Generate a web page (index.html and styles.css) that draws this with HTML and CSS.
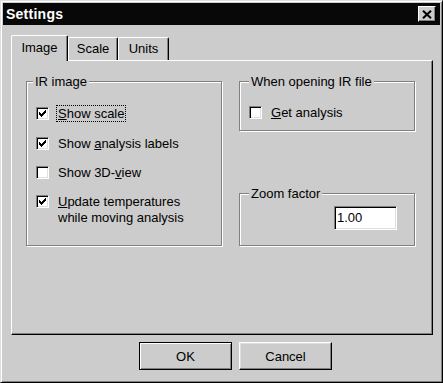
FILE: index.html
```html
<!DOCTYPE html>
<html lang="en">
<head>
<meta charset="utf-8">
<title>Settings</title>
<link rel="stylesheet" href="styles.css">
</head>
<body>
<div class="window">
  <div class="titlebar">
    <span class="title">Settings</span>
    <button class="close" type="button" aria-label="Close">
      <svg width="10" height="9" viewBox="0 0 10 9"><path d="M1 0.8 L9 8.2 M9 0.8 L1 8.2" stroke="#000" stroke-width="2.1" fill="none"/></svg>
    </button>
  </div>
  <div class="body">
    <div class="tabs">
      <div class="tab tab--active tab--image">Image</div>
      <div class="tab tab--scale">Scale</div>
      <div class="tab tab--units">Units</div>
    </div>
    <div class="panel">
      <div class="panel-grid">
        <div class="group group--ir">
          <span class="group-caption group-caption--ir">IR image</span>
          <div class="check-list">
            <div class="check-row check-row--first">
              <span class="checkbox"><svg class="tick" width="7" height="7" viewBox="0 0 7 7"><path d="M6 0h1v1h-1zM5 1h2v1h-2zM0 2h1v1h-1zM4 2h3v1h-3zM0 3h2v1h-2zM3 3h3v1h-3zM0 4h5v1h-5zM1 5h3v1h-3zM2 6h1v1h-1z" fill="#000"/></svg></span>
              <span class="check-label check-label--focus"><u>S</u>how scale</span>
            </div>
            <div class="check-row">
              <span class="checkbox"><svg class="tick" width="7" height="7" viewBox="0 0 7 7"><path d="M6 0h1v1h-1zM5 1h2v1h-2zM0 2h1v1h-1zM4 2h3v1h-3zM0 3h2v1h-2zM3 3h3v1h-3zM0 4h5v1h-5zM1 5h3v1h-3zM2 6h1v1h-1z" fill="#000"/></svg></span>
              <span class="check-label">Show <u>a</u>nalysis labels</span>
            </div>
            <div class="check-row">
              <span class="checkbox"></span>
              <span class="check-label">Show 3D-<u>v</u>iew</span>
            </div>
            <div class="check-row">
              <span class="checkbox"><svg class="tick" width="7" height="7" viewBox="0 0 7 7"><path d="M6 0h1v1h-1zM5 1h2v1h-2zM0 2h1v1h-1zM4 2h3v1h-3zM0 3h2v1h-2zM3 3h3v1h-3zM0 4h5v1h-5zM1 5h3v1h-3zM2 6h1v1h-1z" fill="#000"/></svg></span>
              <span class="check-label check-label--multi"><u>U</u>pdate temperatures<br>while moving analysis</span>
            </div>
          </div>
        </div>
        <div class="right-col">
          <div class="group group--open">
            <span class="group-caption">When opening IR file</span>
            <div class="check-row">
              <span class="checkbox"></span>
              <span class="check-label"><u>G</u>et analysis</span>
            </div>
          </div>
          <div class="group group--zoom">
            <span class="group-caption">Zoom factor</span>
            <div class="textbox">1.00</div>
          </div>
        </div>
      </div>
    </div>
    <div class="buttons">
      <button class="btn btn--default" type="button">OK</button>
      <button class="btn" type="button">Cancel</button>
    </div>
  </div>
</div>
</body>
</html>
```

FILE: styles.css
```css
* {
  box-sizing: border-box;
}

html, body {
  margin: 0;
  padding: 0;
  background: #cccccc;
}

body {
  font-family: "Liberation Sans", Arial, sans-serif;
  font-size: 13px;
  color: #000;
}

.window {
  width: 443px;
  height: 383px;
  background: #cccccc;
  border: 1px solid;
  border-color: #dfdfdf #000 #000 #dfdfdf;
  box-shadow: inset 1px 1px 0 #fff, inset -1px -1px 0 #808080;
  padding: 2px;
}

.titlebar {
  height: 22px;
  background: #080808;
  display: flex;
  align-items: center;
  justify-content: space-between;
  padding: 0 4px 0 3px;
}

.title {
  color: #fff;
  font-weight: bold;
  font-size: 14px;
  letter-spacing: 0.25px;
  line-height: 22px;
}

.close {
  width: 18px;
  height: 16px;
  padding: 0;
  margin: 0;
  background: #cccccc;
  border: 1px solid;
  border-color: #fff #000 #000 #fff;
  box-shadow: inset -1px -1px 0 #808080;
  display: flex;
  align-items: center;
  justify-content: center;
}

.close svg {
  display: block;
}

.body {
  padding: 10px 0 0 8px;
}

.tabs {
  display: flex;
  align-items: flex-end;
  height: 25px;
}

.tab {
  height: 23px;
  border: 1px solid;
  border-bottom: none;
  border-color: #fff #000 #000 #fff;
  border-radius: 2px 2px 0 0;
  box-shadow: inset -1px 0 0 #808080;
  background: #cccccc;
  padding-top: 3px;
  line-height: 15px;
  text-align: center;
}

.tab--active {
  height: 26px;
  margin-bottom: -1px;
  padding-top: 4px;
  position: relative;
  z-index: 1;
}

.tab--image { width: 57px; }
.tab--scale { width: 50px; }
.tab--units { width: 51px; }

.panel {
  width: 422px;
  height: 275px;
  border: 1px solid;
  border-color: #fff #000 #000 #fff;
  box-shadow: inset -1px -1px 0 #808080;
  padding: 20px 0 0 14px;
}

.panel-grid {
  display: grid;
  grid-template-columns: 196px 176px;
  column-gap: 17px;
}

.group {
  position: relative;
  border: 1px solid #808080;
  box-shadow: inset 1px 1px 0 #fff, 1px 1px 0 #fff;
}

.group-caption {
  position: absolute;
  top: -8px;
  left: 9px;
  padding: 0 2px;
  line-height: 15px;
  background: #cccccc;
  white-space: nowrap;
}

.group-caption--ir {
  left: 6px;
}

.group--ir {
  height: 165px;
  padding: 23px 0 0 9px;
}

.right-col {
  display: flex;
  flex-direction: column;
  justify-content: space-between;
}

.group--open {
  height: 50px;
  padding: 22px 0 0 9px;
}

.group--zoom {
  height: 53px;
  padding: 12px 17px 0 0;
  display: flex;
  justify-content: flex-end;
  align-items: flex-start;
}

.check-list {
  display: flex;
  flex-direction: column;
  gap: 12px;
}

.check-row {
  display: flex;
  align-items: flex-start;
}

.check-row--first {
  margin-bottom: 1px;
}

.checkbox {
  flex: none;
  width: 13px;
  height: 13px;
  margin-top: 2px;
  margin-right: 7px;
  background: #fff;
  border: 1px solid;
  border-color: #808080 #fff #fff #808080;
  box-shadow: inset 1px 1px 0 #000, inset -1px -1px 0 #dfdfdf;
  padding: 2px;
}

.tick {
  display: block;
}

.check-label {
  display: inline-block;
  line-height: 15px;
  padding: 0 1px;
  border: 1px dotted transparent;
  white-space: nowrap;
}

.check-label--focus {
  border-color: #000;
}

.check-label--multi {
  line-height: 16px;
}

.textbox {
  width: 63px;
  height: 24px;
  background: #fff;
  border: 1px solid;
  border-color: #808080 #fff #fff #808080;
  box-shadow: inset 1px 1px 0 #000, inset -1px -1px 0 #dfdfdf;
  padding-left: 2px;
  line-height: 22px;
}

.buttons {
  display: flex;
  gap: 7px;
  margin-top: 7px;
  padding-left: 128px;
}

.btn {
  width: 93px;
  height: 28px;
  margin: 0;
  padding: 0;
  font-family: "Liberation Sans", Arial, sans-serif;
  font-size: 13px;
  color: #000;
  background: #cccccc;
  border: 1px solid;
  border-color: #fff #000 #000 #fff;
  box-shadow: inset -1px -1px 0 #808080, inset 1px 1px 0 #dfdfdf;
}

.btn--default {
  border-color: #000;
  box-shadow: inset 1px 1px 0 #fff, inset -1px -1px 0 #808080;
}
```
